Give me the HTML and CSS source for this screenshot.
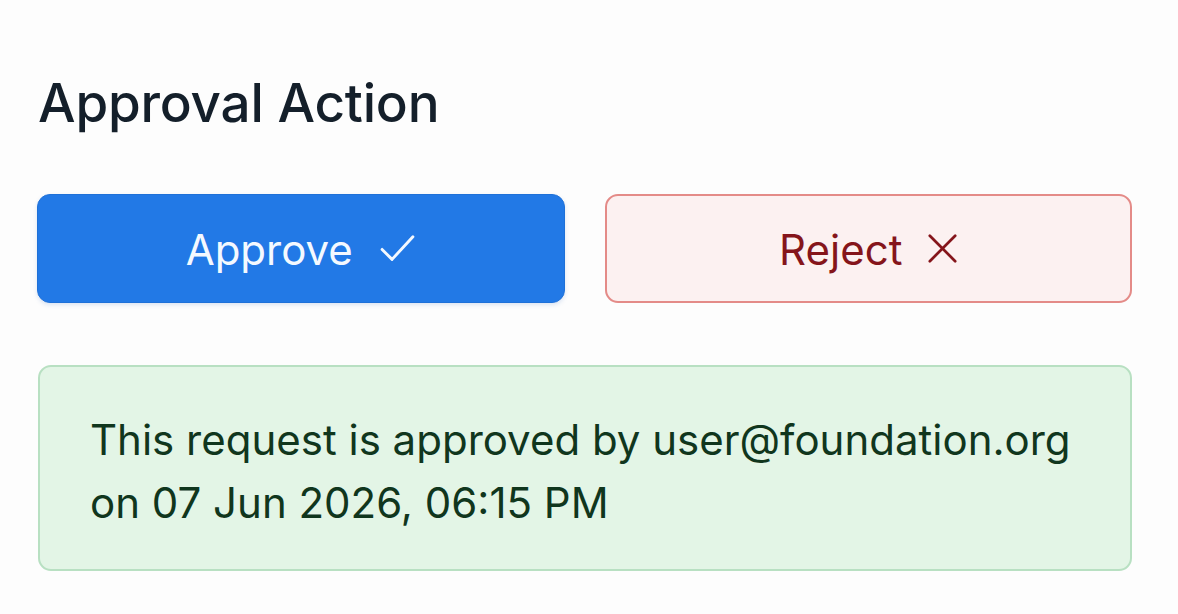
FILE: index.html
```html
<!DOCTYPE html>
<html>
<head>
<meta charset="utf-8">
<link rel="stylesheet" href="styles.css">
</head>
<body>
<main class="panel">
  <h1 class="title">Approval Action</h1>
  <div class="actions">
    <button class="btn btn-approve">
      <span>Approve</span>
      <svg class="icon" viewBox="0 0 40 32" width="40" height="32"><path d="M3 17 L14 28 L37 3" fill="none" stroke="currentColor" stroke-width="3.2" stroke-linecap="round" stroke-linejoin="round"/></svg>
    </button>
    <button class="btn btn-reject">
      <span>Reject</span>
      <svg class="icon" viewBox="0 0 32 32" width="32" height="32"><path d="M2 2 L30 30 M30 2 L2 30" fill="none" stroke="currentColor" stroke-width="3" stroke-linecap="round"/></svg>
    </button>
  </div>
  <div class="notice">
    This request is approved by user@foundation.org<br>on 07 Jun 2026, 06:15 PM
  </div>
</main>
</body>
</html>
```
FILE: styles.css
```css
html, body {
  margin: 0;
  padding: 0;
  background: #fdfdfd;
}
body {
  font-family: Inter, Roboto, "Liberation Sans", sans-serif;
}
.panel {
  padding: 70px 46px 0 37px;
  display: flex;
  flex-direction: column;
}
.title {
  margin: 0;
  font-size: 53px;
  font-weight: 450;
  color: #141f2a;
  line-height: 66px;
  letter-spacing: -0.2px;
  padding-left: 1px;
}
.actions {
  display: grid;
  grid-template-columns: 1fr 1fr;
  gap: 40px;
  margin-top: 58px;
}
.btn {
  height: 109px;
  border-radius: 13px;
  font-family: inherit;
  font-size: 42px;
  font-weight: 400;
  display: flex;
  align-items: center;
  justify-content: center;
  gap: 26px;
  cursor: pointer;
}
.btn span {
  margin-top: 2px;
}
.btn-approve {
  background: #2279e6;
  border: 1px solid #1f71d8;
  color: #f4f9ff;
  box-shadow: 0 2px 4px rgba(30, 90, 180, 0.15);
}
.btn-reject {
  background: #fcf1f1;
  border: 2px solid #e48b88;
  color: #85151b;
}
.btn-approve .icon {
  width: 37px;
  height: 29px;
}
.btn-reject .icon {
  width: 29px;
  height: 29px;
}
.notice {
  margin-top: 62px;
  margin-left: 1px;
  background: #e3f5e6;
  border: 2px solid #b8e0c2;
  border-radius: 13px;
  padding: 41px 50px 35px 50px;
  font-size: 42px;
  line-height: 63px;
  color: #10361d;
}
```
